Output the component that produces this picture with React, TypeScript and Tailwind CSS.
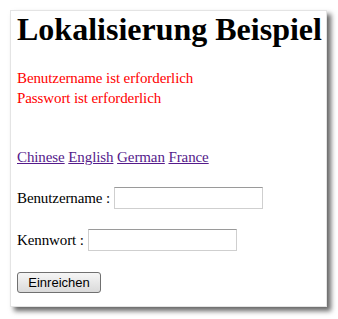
export default function App() {
	return (
		<div className="min-h-[319px] w-[338px] bg-white p-[10px] font-['Liberation_Serif',serif] text-[15px] tracking-[-0.1px] text-black">
			<div className="h-[297px] w-[317px] border border-[#e4e4e4] bg-white pl-[6px] pt-0 shadow-[4px_4px_5px_rgba(0,0,0,0.6)]">
				<h1 className="text-[32px] font-bold leading-[37px] tracking-normal">Lokalisierung Beispiel</h1>

				{/* validation errors */}
				<div className="mt-[20px] leading-[20px] text-[#ff0000]">
					<div>Benutzername ist erforderlich</div>
					<div>Passwort ist erforderlich</div>
				</div>

				<div className="mt-[39px] leading-[20px]">
					<a href="#" className="text-[#551a8b] underline">Chinese</a>{' '}
					<a href="#" className="text-[#551a8b] underline">English</a>{' '}
					<a href="#" className="text-[#551a8b] underline">German</a>{' '}
					<a href="#" className="text-[#551a8b] underline">France</a>
				</div>

				<div className="mt-[20px] flex h-[22px] items-center leading-[20px]">
					<span className="whitespace-pre">Benutzername : </span>
					<input
						type="text"
						className="h-[22px] w-[149px] border border-[#cfcfcf] border-t-[#9a9a9a] bg-white outline-none"
					/>
				</div>

				<div className="mt-[20px] flex h-[22px] items-center leading-[20px]">
					<span className="whitespace-pre">Kennwort : </span>
					<input
						type="password"
						className="h-[22px] w-[149px] border border-[#cfcfcf] border-t-[#9a9a9a] bg-white outline-none"
					/>
				</div>

				<button
					type="button"
					className="mt-[21px] h-[21px] w-[84px] rounded-[3px] border border-[#707070] bg-gradient-to-b from-[#f6f6f6] to-[#dadada] font-['Liberation_Sans',sans-serif] text-[13px] leading-[19px] tracking-normal text-black"
				>
					Einreichen
				</button>
			</div>
		</div>
	)
}
